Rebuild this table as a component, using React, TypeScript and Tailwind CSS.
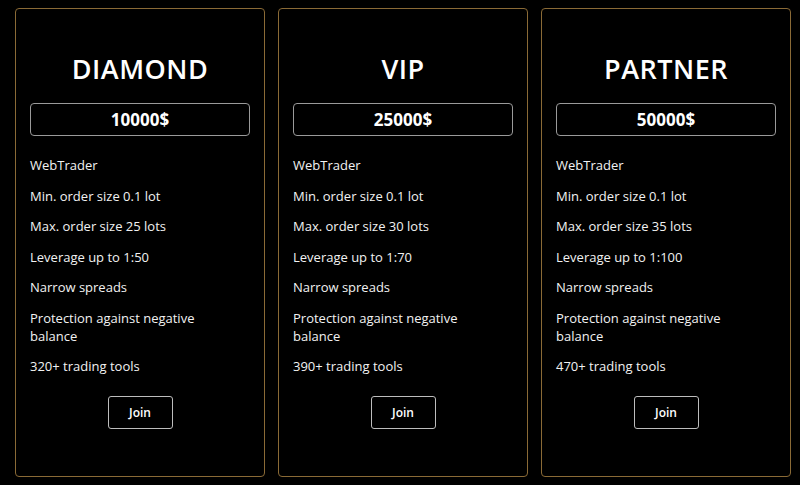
const plans = [
  {
    name: "DIAMOND",
    price: "10000$",
    maxOrder: "25 lots",
    leverage: "1:50",
    tools: "320+",
  },
  {
    name: "VIP",
    price: "25000$",
    maxOrder: "30 lots",
    leverage: "1:70",
    tools: "390+",
  },
  {
    name: "PARTNER",
    price: "50000$",
    maxOrder: "35 lots",
    leverage: "1:100",
    tools: "470+",
  },
];

export default function App() {
  return (
    <div
      className="w-[800px] h-[485px] bg-black text-white flex gap-[13px] px-[15px] pt-[8px] overflow-hidden"
      style={{ fontFamily: "'Open Sans', 'Liberation Sans', sans-serif" }}
    >
      {plans.map((p) => {
        const features = [
          "WebTrader",
          "Min. order size 0.1 lot",
          `Max. order size ${p.maxOrder}`,
          `Leverage up to ${p.leverage}`,
          "Narrow spreads",
          "Protection against negative balance",
          `${p.tools} trading tools`,
        ];
        return (
          <div
            key={p.name}
            className="w-[250px] h-[469px] shrink-0 border border-[#8a6a36] rounded-[4px] flex flex-col pt-[44px] px-[14px]"
          >
            {/* Title */}
            <h2 className="text-[27px] leading-[32px] font-semibold text-center tracking-[0.5px]">
              {p.name}
            </h2>

            {/* Price box */}
            <div className="mt-[18px] h-[33px] border border-[#9a9a9a] rounded-[4px] flex items-center justify-center text-[17px] font-bold">
              {p.price}
            </div>

            {/* Features */}
            <ul className="mt-[20px] flex flex-col gap-[12.5px] text-[13px] leading-[18px] text-[#f2f2f2]">
              {features.map((f) => (
                <li key={f} className="pr-[30px]">
                  {f}
                </li>
              ))}
            </ul>

            <button className="mt-[21px] mx-auto w-[65px] h-[33px] border border-[#bdbdbd] rounded-[3px] text-[12px] font-semibold text-white">
              Join
            </button>
          </div>
        );
      })}
    </div>
  );
}
